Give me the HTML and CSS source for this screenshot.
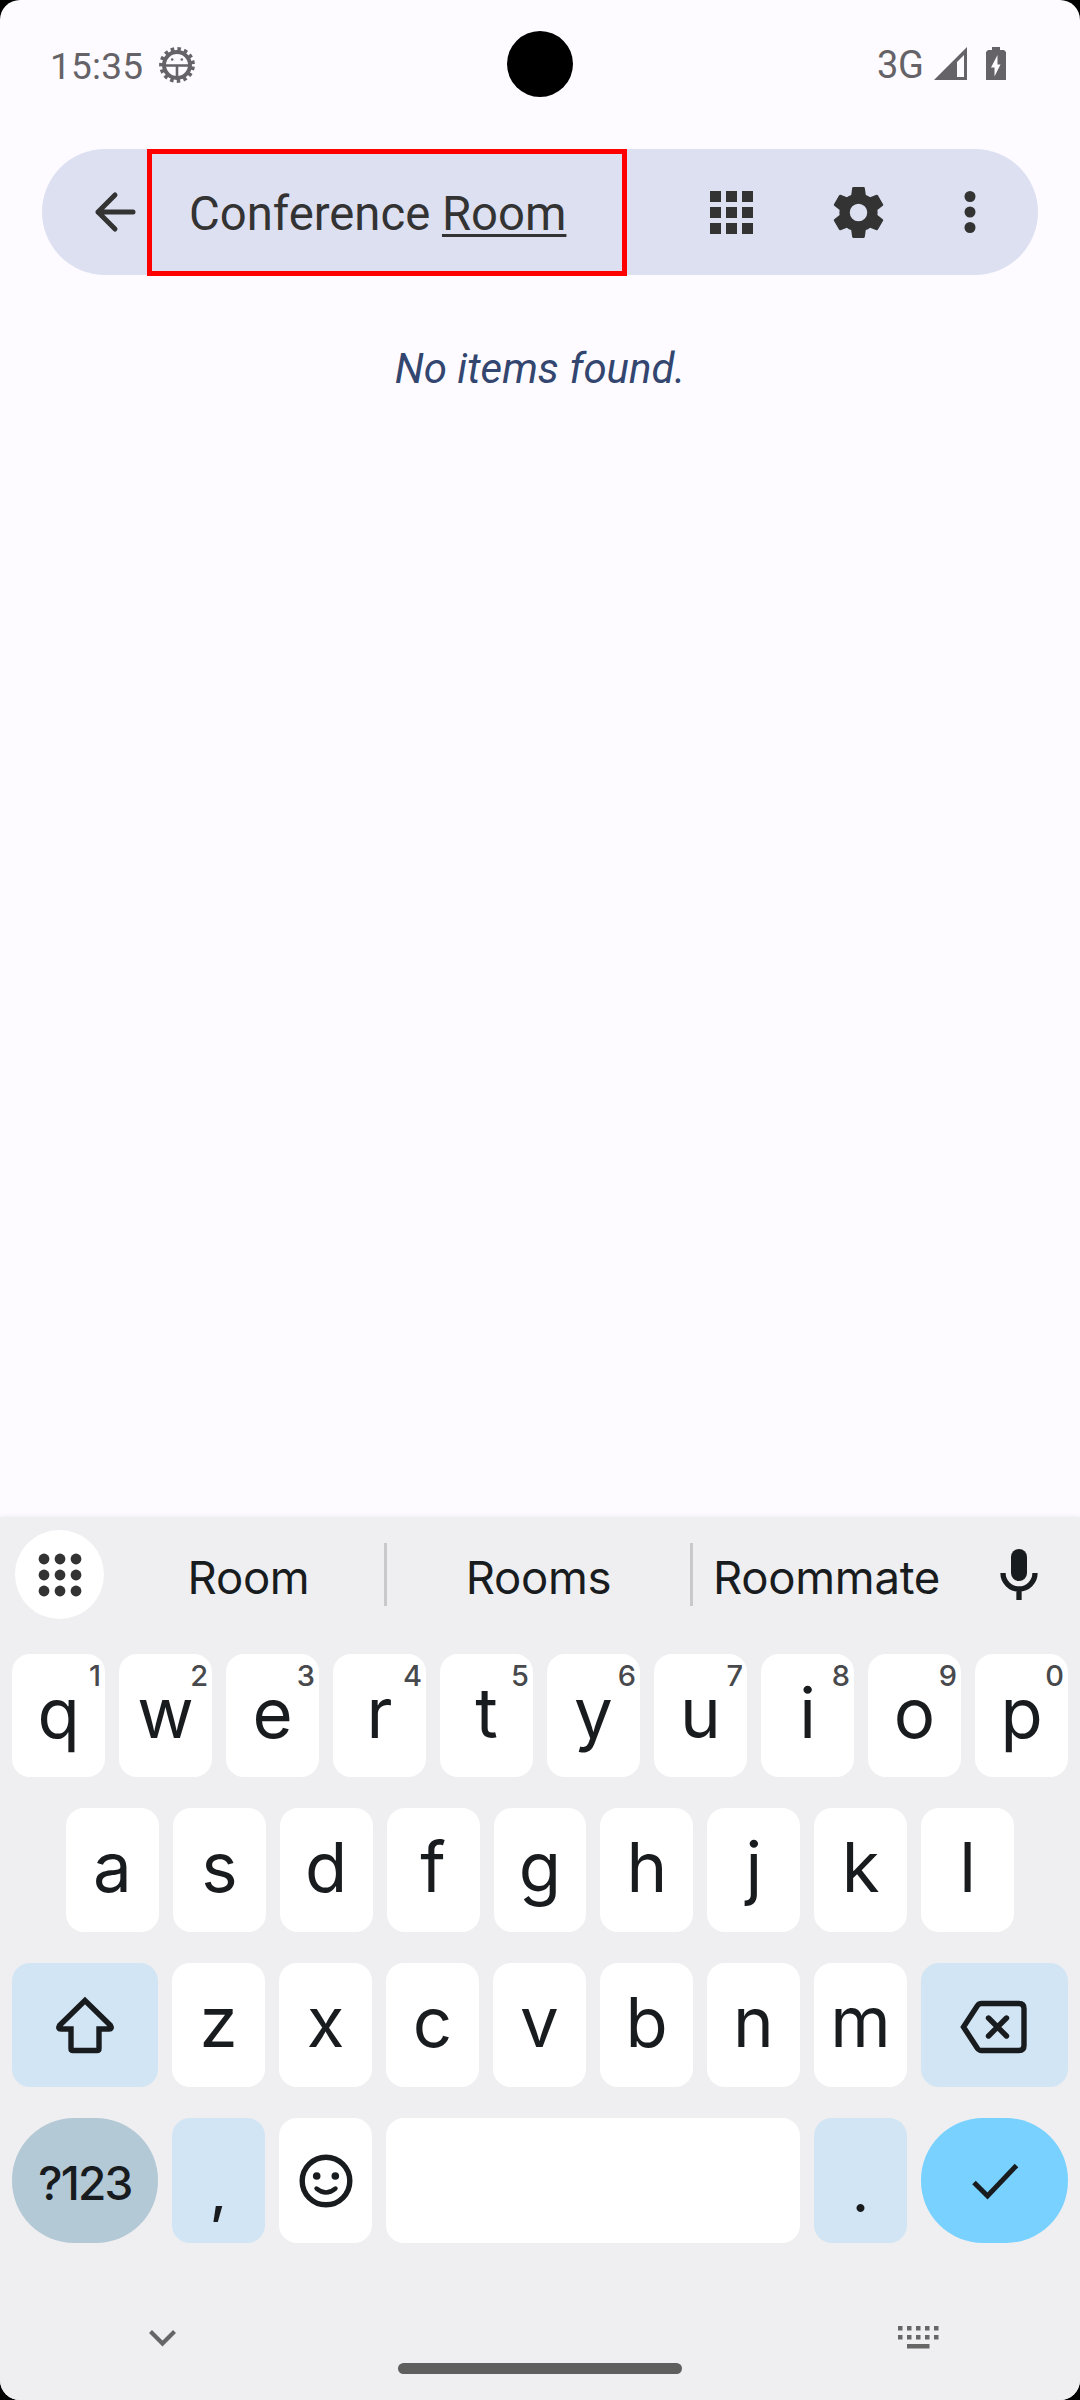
FILE: index.html
```
<!DOCTYPE html>
<html lang="en">
<head>
<meta charset="utf-8">
<title>Search</title>
<link rel="stylesheet" href="styles.css">
</head>
<body>
<div class="screen">
  <header class="status">
    <div class="status-left">
      <span class="clock">15:35</span>
      <svg class="bug" viewBox="0 0 36 36" width="36" height="36"><circle cx="18" cy="18" r="16" fill="none" stroke="#656367" stroke-width="3.8" stroke-dasharray="3.5 3.202" stroke-dashoffset="-1.6"/><circle cx="18" cy="18" r="13" fill="none" stroke="#656367" stroke-width="4"/><path d="M5 18.500h26M18 18v14" stroke="#656367" stroke-width="2.600"/><circle cx="13.200" cy="12.500" r="1.300" fill="#656367"/><circle cx="22.800" cy="12.500" r="1.300" fill="#656367"/></svg>
    </div>
    <div class="camera"></div>
    <div class="status-right">
      <span class="network">3G</span>
      <svg class="signal" viewBox="0 0 33 33" width="33" height="33"><path fill="#656367" fill-rule="evenodd" d="M33 0V33H0ZM30 8L23 15V30H30Z"/></svg>
      <svg class="battery" viewBox="0 0 20 33" width="20" height="33"><path fill="#656367" fill-rule="evenodd" d="M6 0h8v3h4l2 2v28H0V5l2-2h4ZM11.500 8L5 20.500H8.500V29.500L14.500 17.500H11.500Z"/></svg>
    </div>
  </header>

  <main class="results">
    <div class="search-bar">
      <svg class="back" viewBox="0 0 42 42" width="42" height="42"><path d="M39 21H4M21 4L4 21L21 38" fill="none" stroke="#333" stroke-width="5" stroke-linecap="round" stroke-linejoin="round"/></svg>
      <div class="query">Conference <span class="composing">Room</span></div>
      <svg class="apps" viewBox="0 0 43 43" width="43" height="43" fill="#333"><path d="M0 0h11v11H0zM16 0h11v11H16zM32 0h11v11H32zM0 16h11v11H0zM16 16h11v11H16zM32 16h11v11H32zM0 32h11v11H0zM16 32h11v11H16zM32 32h11v11H32z"/></svg>
      <svg class="gear" viewBox="2 2 20 20" width="53" height="53" fill="#333"><path d="M19.14 12.94c.04-.3.06-.61.06-.94 0-.32-.02-.64-.07-.94l2.03-1.58c.18-.14.23-.41.12-.61l-1.92-3.32c-.12-.22-.37-.29-.59-.22l-2.39.96c-.5-.38-1.03-.7-1.62-.94l-.36-2.54c-.04-.24-.24-.41-.48-.41h-3.84c-.24 0-.43.17-.47.41l-.36 2.54c-.59.24-1.13.57-1.62.94l-2.39-.96c-.22-.08-.47 0-.59.22L2.740 8.870c-.12.21-.08.47.12.61l2.030 1.580c-.05.3-.09.63-.09.94s.02.64.07.94l-2.030 1.580c-.18.14-.23.41-.12.61l1.920 3.320c.12.22.37.29.59.22l2.390-.96c.5.38 1.030.7 1.620.94l.36 2.540c.05.24.24.41.48.41h3.840c.24 0 .44-.17.47-.41l.36-2.540c.59-.24 1.130-.56 1.620-.94l2.390.96c.22.08.47 0 .59-.22l1.920-3.320c.12-.22.07-.47-.12-.61zM12 15.300a3.300 3.300 0 1 1 0-6.600a3.300 3.300 0 0 1 0 6.600z"/></svg>
      <svg class="more" viewBox="0 0 12 44" width="12" height="44" fill="#333"><circle cx="6" cy="6.500" r="5.500"/><circle cx="6" cy="22" r="5.500"/><circle cx="6" cy="37.500" r="5.500"/></svg>
    </div>
    <p class="empty">No items found.</p>
  </main>

  <section class="keyboard">
    <div class="suggestions">
      <div class="launcher"><svg viewBox="0 0 44 44" width="44" height="44" fill="#333"><circle cx="6" cy="6" r="5.400"/><circle cx="22" cy="6" r="5.400"/><circle cx="38" cy="6" r="5.400"/><circle cx="6" cy="22" r="5.400"/><circle cx="22" cy="22" r="5.400"/><circle cx="38" cy="22" r="5.400"/><circle cx="6" cy="38" r="5.400"/><circle cx="22" cy="38" r="5.400"/><circle cx="38" cy="38" r="5.400"/></svg></div>
      <span class="word word-1">Room</span>
      <i class="divider"></i>
      <span class="word word-2">Rooms</span>
      <i class="divider"></i>
      <span class="word word-3">Roommate</span>
      <svg class="mic" viewBox="0 0 38 51" width="38" height="51"><rect x="11" y="0" width="16" height="32" rx="8" fill="#191c1e"/><path d="M3 24a16 16 0 0 0 32 0M19 40V51" fill="none" stroke="#191c1e" stroke-width="5.300"/></svg>
    </div>

    <div class="row row-1">
      <div class="key">q<sup>1</sup></div><div class="key">w<sup>2</sup></div><div class="key">e<sup>3</sup></div><div class="key">r<sup>4</sup></div><div class="key">t<sup>5</sup></div><div class="key">y<sup>6</sup></div><div class="key">u<sup>7</sup></div><div class="key">i<sup>8</sup></div><div class="key">o<sup>9</sup></div><div class="key">p<sup>0</sup></div>
    </div>
    <div class="row row-2">
      <div class="key">a</div><div class="key">s</div><div class="key">d</div><div class="key">f</div><div class="key">g</div><div class="key">h</div><div class="key">j</div><div class="key">k</div><div class="key">l</div>
    </div>
    <div class="row row-3">
      <div class="key wide tinted"><svg viewBox="0 0 60 60" width="60" height="60"><path d="M30 5.500L4.500 30.500Q2.500 34 6 34H16V53.500Q16 55.500 18 55.500H42Q44 55.500 44 53.500V34H54Q57.500 34 55.500 30.500Z" fill="none" stroke="#191c1e" stroke-width="5.400"/></svg></div>
      <div class="key">z</div><div class="key">x</div><div class="key">c</div><div class="key">v</div><div class="key">b</div><div class="key">n</div><div class="key">m</div>
      <div class="key wide tinted"><svg class="backspace" viewBox="0 0 68 54" width="68" height="54"><path d="M3.500 27L17.500 5.500Q19 3.500 21.500 3.500H59Q64 3.500 64 8.500V45.500Q64 50.500 59 50.500H21.500Q19 50.500 17.500 48.500ZM28.500 18L46.500 36M46.500 18L28.500 36" fill="none" stroke="#191c1e" stroke-width="5.400" stroke-linecap="round" stroke-linejoin="miter"/></svg></div>
    </div>
    <div class="row row-4">
      <div class="key wide symbols">?123</div>
      <div class="key tinted punct">,</div>
      <div class="key"><svg viewBox="0 0 54 54" width="54" height="54"><circle cx="27" cy="27" r="23.800" fill="none" stroke="#191c1e" stroke-width="5.400"/><circle cx="17.700" cy="22" r="3.800" fill="#191c1e"/><circle cx="36.300" cy="22" r="3.800" fill="#191c1e"/><path d="M17.500 34.500Q27 42.500 36.500 34.500" fill="none" stroke="#191c1e" stroke-width="4.400" stroke-linecap="round"/></svg></div>
      <div class="key space"></div>
      <div class="key tinted punct">.</div>
      <div class="key wide enter"><svg viewBox="0 0 48 38" width="48" height="38"><path d="M3 20.500L16.500 34L45.500 3.500" fill="none" stroke="#191c1e" stroke-width="5"/></svg></div>
    </div>

    <footer class="nav">
      <svg class="chevron" viewBox="0 0 27 17" width="27" height="17"><path d="M1.500 1.500L13.500 13.500L25.500 1.500" fill="none" stroke="#666" stroke-width="4.200"/></svg>
      <div class="home"></div>
      <svg class="switcher" viewBox="0 0 41 23" width="41" height="23" fill="#666"><path d="M0 0h4.500v4.500H0zM9 0h4.500v4.500H9zM18 0h4.500v4.500H18zM27 0h4.500v4.500H27zM36 0h4.500v4.500H36zM0 9h4.500v4.500H0zM9 9h4.500v4.500H9zM18 9h4.500v4.500H18zM27 9h4.500v4.500H27zM36 9h4.500v4.500H36zM9 18h22.500v4.500H9z"/></svg>
    </footer>
  </section>
</div>
</body>
</html>
```
FILE: styles.css
```
* { box-sizing: border-box; }
body { margin: 0; background: #000; }
svg { display: block; flex: none; }

.screen {
  width: 1080px;
  height: 2400px;
  display: flex;
  flex-direction: column;
  overflow: hidden;
  border-radius: 20px;
  background: #fdfbff;
  font-family: Roboto, sans-serif;
}

.status {
  height: 149px;
  display: grid;
  grid-template-columns: 507px 66px 507px;
  color: #656367;
}
.status-left { display: flex; padding: 47px 0 0 50px; }
.clock { width: 109px; font-size: 37px; line-height: 40px; letter-spacing: .2px; }
.camera { width: 66px; height: 66px; margin-top: 31px; border-radius: 50%; background: #000; }
.status-right { display: flex; padding: 47px 74px 0 0; justify-content: flex-end; }
.network { width: 57px; font: 450 38px/36px Roboto, sans-serif; letter-spacing: -0.3px; }
.signal { margin-right: 19px; }

.results { height: 1368px; padding: 0 42px; }
.search-bar {
  height: 126px;
  display: flex;
  align-items: center;
  padding-left: 52px;
  border-radius: 63px;
  background: #dde0f1;
}
.query {
  width: 480px;
  height: 127px;
  margin-left: 11px;
  padding-left: 37px;
  border: 5px solid #f00;
  font-size: 47.25px;
  line-height: 120px;
  color: #333;
  white-space: nowrap;
}
.composing { text-decoration: underline; text-decoration-thickness: 2.5px; text-underline-offset: 4px; text-decoration-skip-ink: none; }
.apps { margin-left: 83px; }
.gear { margin-left: 79px; }
.more { margin-left: 79px; }
.empty {
  margin: 69px 0 0;
  font-size: 42px;
  line-height: 50px;
  font-style: italic;
  text-align: center;
  color: #33466f;
}

.keyboard {
  height: 883px;
  background: #efeff1;
  box-shadow: 0 0 5px rgba(0, 0, 0, .08);
  font-family: Inter, sans-serif;
  color: #191c1e;
}
.suggestions { display: flex; height: 137px; padding: 13px 0 0 15px; }
.launcher {
  width: 89px;
  height: 89px;
  display: grid;
  place-items: center;
  border-radius: 50%;
  background: #fff;
}
.word { font-size: 45.500px; line-height: 96px; font-weight: 370; text-align: center; white-space: nowrap; letter-spacing: -.3px; }
.word-1 { width: 280px; padding-left: 9px; }
.word-2 { width: 303px; }
.word-3 { width: 270px; padding-right: 3px; }
.divider { width: 3px; height: 63px; margin-top: 13px; background: #c9c9cb; }
.mic { margin: 19px 0 0 37px; }

.row { display: flex; gap: 14px; height: 124px; padding: 0 12px; margin-bottom: 31px; }
.row-1 { height: 123px; }
.row-2 { padding: 0 66px; }
.row-4 { height: 125px; }
.key {
  position: relative;
  flex: 1 1 0;
  display: flex;
  align-items: center;
  justify-content: center;
  border-radius: 18px;
  background: #fff;
  font-size: 69px;
  font-weight: 370;
  line-height: 119px;
}
.row-1 .key, .row-2 .key, .row-3 .key { padding-bottom: 5px; }
.row .wide { flex: 0 0 147px; padding-bottom: 0; }
.row-3 .wide:first-child, .row-4 .wide:first-child { flex-basis: 146px; }
.key sup {
  position: absolute;
  top: 9px;
  right: 4px;
  font: 500 29px/26px Inter, sans-serif;
  color: #47494c;
}
.tinted { background: #d2e5f4; }
.row .symbols { border-radius: 62px; background: #b4c9d6; font-size: 46px; font-weight: 480; letter-spacing: -1.8px; padding-top: 5px; }
.punct { font-size: 56px; padding-top: 24px; font-weight: 500; }
.row .space { flex: 0 0 414px; }
.enter { border-radius: 62px; background: #78d1ff; }
.backspace { margin: 4px 2px 0 0; }

.nav {
  display: grid;
  grid-template-columns: 249px 284px 216px 41px;
  padding: 0 0 0 149px;
}
.chevron { margin-top: 56px; }
.home { height: 11px; margin-top: 89px; border-radius: 6px; background: #5f5f5f; }
.switcher { grid-column: 4; margin-top: 52px; }
```
